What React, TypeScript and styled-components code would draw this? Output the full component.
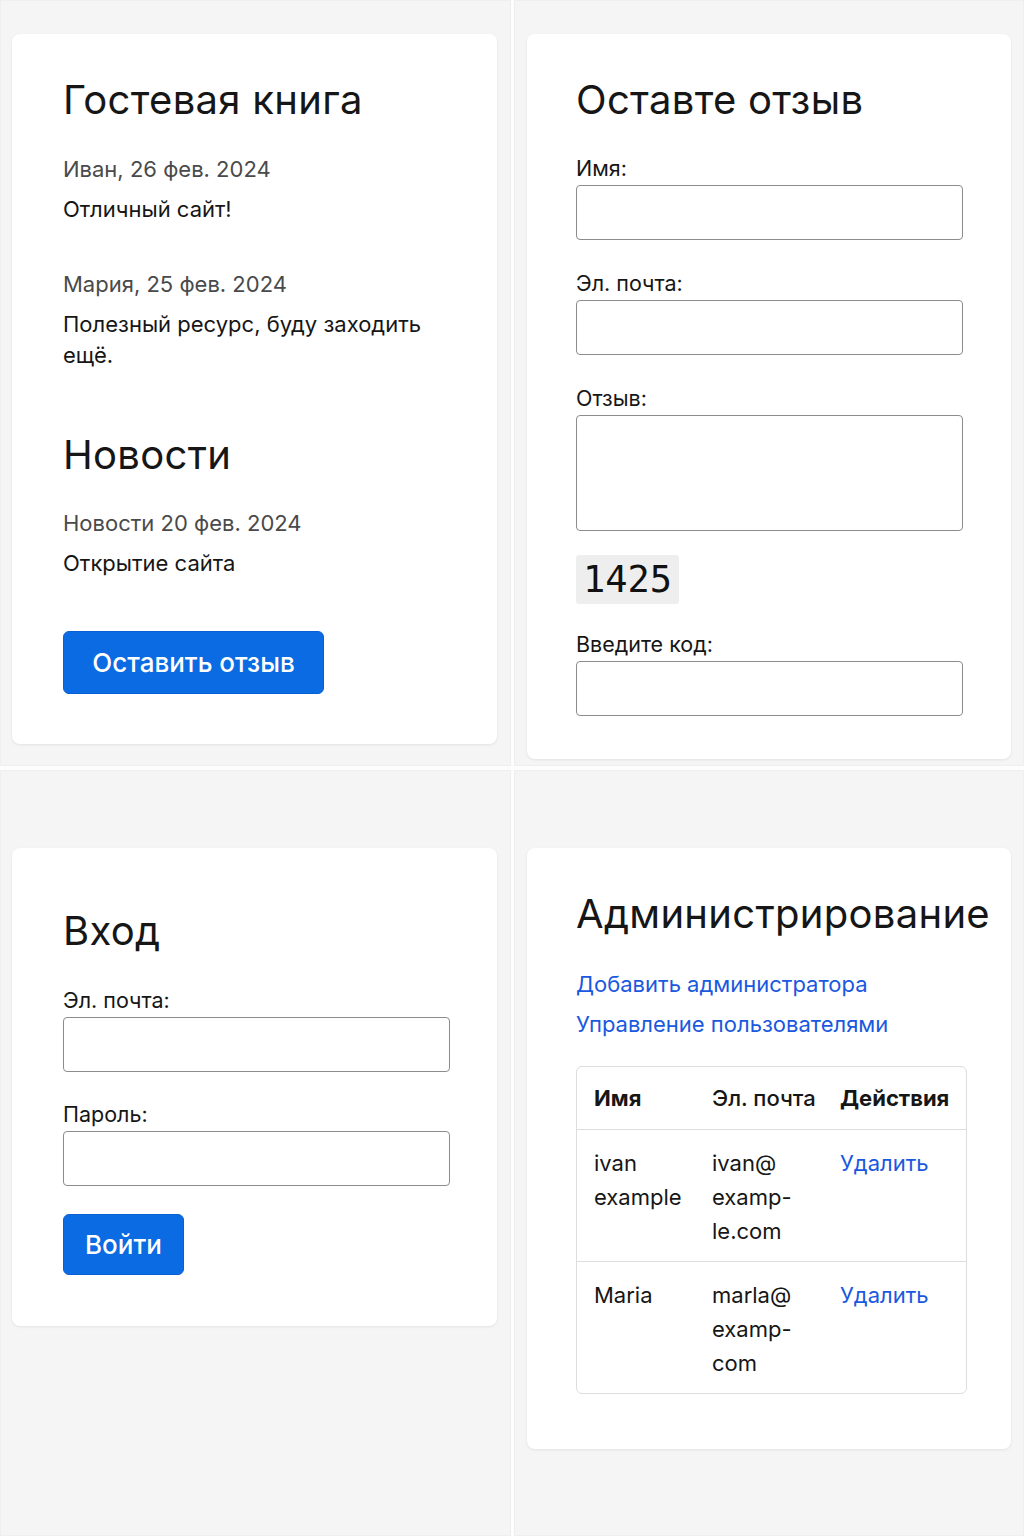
import React from "react";
import styled, { createGlobalStyle } from "styled-components";

const GlobalStyle = createGlobalStyle`
  body {
    margin: 0;
    background: #f5f5f5;
    font-family: Inter, "Noto Sans", sans-serif;
    color: #1a1a1a;
  }
`;

const Page = styled.div`
  width: 1024px;
  height: 1536px;
  display: grid;
  grid-template-columns: 511px 510px;
  grid-template-rows: 766px 766px;
  gap: 4px 3px;
  background: #fdfdfd;
`;

const Quadrant = styled.section<{ $top: number; $left: number; $right: number }>`
  background: #f5f5f5;
  padding: ${(p) => p.$top}px ${(p) => p.$right}px 0 ${(p) => p.$left}px;
  box-shadow: inset 0 0 0 1px #efefef;
`;

const Card = styled.div<{ $pt?: number; $pb?: number; $pl?: number }>`
  background: #fff;
  border-radius: 8px;
  box-shadow: 0 1px 3px rgba(0, 0, 0, 0.08);
  padding: ${(p) => p.$pt ?? 42}px 48px ${(p) => p.$pb ?? 50}px
    ${(p) => p.$pl ?? 51}px;
  display: flex;
  flex-direction: column;
  align-items: flex-start;
`;

const Title = styled.h1<{ $mt?: number }>`
  margin: ${(p) => p.$mt ?? 0}px 0 0;
  font-size: 40px;
  line-height: 48px;
  font-weight: 400;
  letter-spacing: 0.3px;
  color: #161616;
  white-space: nowrap;
`;

const Entry = styled.div<{ $mt: number }>`
  margin-top: ${(p) => p.$mt}px;
  display: flex;
  flex-direction: column;
  gap: 9px;
`;

const Meta = styled.div`
  font-size: 22px;
  line-height: 31px;
  color: #4a4a4a;
`;

const Text = styled.div`
  font-size: 22px;
  line-height: 31px;
  color: #161616;
  max-width: 385px;
`;

const Button = styled.button<{ $w: number; $h: number; $mt: number }>`
  margin-top: ${(p) => p.$mt}px;
  width: ${(p) => p.$w}px;
  height: ${(p) => p.$h}px;
  background: #0a6be3;
  border: 1px solid #0a5fd4;
  border-radius: 6px;
  color: #fff;
  font-family: Inter, "Noto Sans", sans-serif;
  font-size: 26px;
  font-weight: 500;
  cursor: pointer;
`;

const Field = styled.div<{ $mt: number }>`
  margin-top: ${(p) => p.$mt}px;
  display: flex;
  flex-direction: column;
  gap: 3px;
  width: 387px;
`;

const Label = styled.label`
  font-size: 21.5px;
  line-height: 28px;
  color: #161616;
`;

const Input = styled.input`
  box-sizing: border-box;
  width: 100%;
  height: 55px;
  border: 1px solid #8c8c8c;
  border-radius: 4px;
  background: #fff;
`;

const TextArea = styled.textarea`
  box-sizing: border-box;
  width: 100%;
  height: 116px;
  border: 1px solid #8c8c8c;
  border-radius: 4px;
  resize: none;
`;

const Captcha = styled.div`
  margin-top: 24px;
  background: #eeeeee;
  border-radius: 3px;
  height: 49px;
  line-height: 49px;
  padding: 0 7px 0 7px;
  font-family: "DejaVu Sans Mono", monospace;
  font-size: 37px;
  color: #111;
`;

const LinkList = styled.div`
  margin-top: 26px;
  display: flex;
  flex-direction: column;
`;

const Link = styled.a`
  font-size: 22px;
  line-height: 40px;
  color: #1a58e0;
  text-decoration: none;
`;

const Table = styled.table`
  margin-top: 22px;
  width: 391px;
  border-collapse: separate;
  border-spacing: 0;
  border: 1px solid #dddddd;
  border-radius: 6px;
  font-size: 22px;
  table-layout: fixed;
`;

const Th = styled.th<{ $w: number; $weight: number; $pl: number }>`
  box-sizing: border-box;
  width: ${(p) => p.$w}px;
  height: 63px;
  padding: 0 0 0 ${(p) => p.$pl}px;
  text-align: left;
  font-weight: ${(p) => p.$weight};
  color: #161616;
  white-space: nowrap;
  border-bottom: 1px solid #dddddd;
`;

const Td = styled.td<{ $pl: number; $last?: boolean }>`
  vertical-align: top;
  padding: 16px 0 13px ${(p) => p.$pl}px;
  line-height: 34px;
  height: 102px;
  color: #161616;
  border-bottom: ${(p) => (p.$last ? "none" : "1px solid #dddddd")};
`;

const Line = styled.div`
  white-space: nowrap;
`;

const DeleteLink = styled.a`
  color: #1a58e0;
  text-decoration: none;
`;

const users = [
  { name: ["ivan", "example"], email: ["ivan@", "examp-", "le.com"] },
  { name: ["Maria"], email: ["marla@", "examp-", "com"] },
];

export default function App() {
  return (
    <>
      <GlobalStyle />
      <Page>
        <Quadrant $top={34} $left={12} $right={14}>
          <Card>
            <Title>Гостевая книга</Title>
            <Entry $mt={30}>
              <Meta>Иван, 26 фев. 2024</Meta>
              <Text>Отличный сайт!</Text>
            </Entry>
            <Entry $mt={44}>
              <Meta>Мария, 25 фев. 2024</Meta>
              <Text>Полезный ресурс, буду заходить ещё.</Text>
            </Entry>
            <Title $mt={60}>Новости</Title>
            <Entry $mt={29}>
              <Meta>Новости 20 фев. 2024</Meta>
              <Text>Открытие сайта</Text>
            </Entry>
            <Button $w={261} $h={63} $mt={52}>
              Оставить отзыв
            </Button>
          </Card>
        </Quadrant>

        <Quadrant $top={34} $left={13} $right={13}>
          <Card $pb={43} $pl={49}>
            <Title>Оставте отзыв</Title>
            <Field $mt={30}>
              <Label>Имя:</Label>
              <Input />
            </Field>
            <Field $mt={29}>
              <Label>Эл. почта:</Label>
              <Input />
            </Field>
            <Field $mt={29}>
              <Label>Отзыв:</Label>
              <TextArea />
            </Field>
            <Captcha>1425</Captcha>
            <Field $mt={26}>
              <Label>Введите код:</Label>
              <Input />
            </Field>
          </Card>
        </Quadrant>

        <Quadrant $top={78} $left={12} $right={14}>
          <Card $pt={59} $pb={51}>
            <Title>Вход</Title>
            <Field $mt={31}>
              <Label>Эл. почта:</Label>
              <Input />
            </Field>
            <Field $mt={28}>
              <Label>Пароль:</Label>
              <Input />
            </Field>
            <Button $w={121} $h={61} $mt={28}>
              Войти
            </Button>
          </Card>
        </Quadrant>

        <Quadrant $top={78} $left={13} $right={13}>
          <Card $pb={55} $pl={49}>
            <Title>Администрирование</Title>
            <LinkList>
              <Link href="#">Добавить администратора</Link>
              <Link href="#">Управление пользователями</Link>
            </LinkList>
            <Table>
              <thead>
                <tr>
                  <Th $w={123} $weight={700} $pl={17}>
                    Имя
                  </Th>
                  <Th $w={128} $weight={500} $pl={12}>
                    Эл. почта
                  </Th>
                  <Th $w={138} $weight={700} $pl={12}>
                    Действия
                  </Th>
                </tr>
              </thead>
              <tbody>
                {users.map((u, i) => {
                  const last = i === users.length - 1;
                  return (
                    <tr key={i}>
                      <Td $pl={17} $last={last}>
                        {u.name.map((l) => (
                          <Line key={l}>{l}</Line>
                        ))}
                      </Td>
                      <Td $pl={12} $last={last}>
                        {u.email.map((l) => (
                          <Line key={l}>{l}</Line>
                        ))}
                      </Td>
                      <Td $pl={12} $last={last}>
                        <DeleteLink href="#">Удалить</DeleteLink>
                      </Td>
                    </tr>
                  );
                })}
              </tbody>
            </Table>
          </Card>
        </Quadrant>
      </Page>
    </>
  );
}
